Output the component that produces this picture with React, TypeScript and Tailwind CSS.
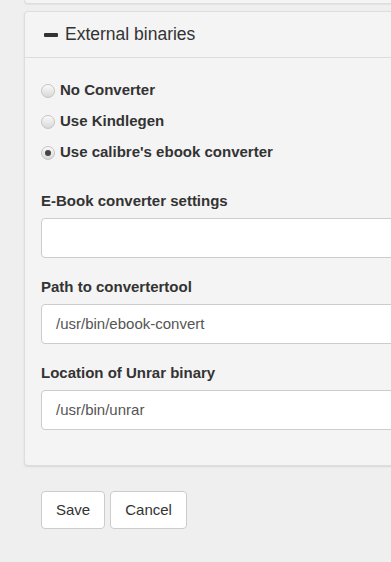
import React from 'react';

const RADIOS = [
  { label: 'No Converter', checked: false },
  { label: 'Use Kindlegen', checked: false },
  { label: "Use calibre's ebook converter", checked: true },
];

const FIELDS = [
  { label: 'E-Book converter settings', value: '' },
  { label: 'Path to convertertool', value: '/usr/bin/ebook-convert' },
  { label: 'Location of Unrar binary', value: '/usr/bin/unrar' },
];

const Radio = ({ checked }: { checked: boolean }) => (
  <span className="w-[14px] h-[14px] rounded-full border border-[#c4c4c4] bg-gradient-to-b from-[#fafafa] to-[#d8d8d8] flex items-center justify-center shrink-0">
    {checked && <span className="w-[6px] h-[6px] rounded-full bg-[#444]" />}
  </span>
);

export default function App() {
  return (
    <div className="min-h-[562px] bg-[#efefef] font-['Liberation_Sans',Arial,sans-serif] text-[#333] overflow-hidden">
      <div className="pl-[24px] -mr-[10px]">
        {/* previous panel (cut off) */}
        <div className="h-[4px] bg-[#f4f4f4] border border-t-0 border-[#dddddd] rounded-b-[4px] shadow-[0_1px_1px_rgba(0,0,0,0.05)]" />

        {/* External binaries panel */}
        <div className="mt-[7px] bg-[#f4f4f4] border border-[#dddddd] rounded-[4px] shadow-[0_1px_2px_rgba(0,0,0,0.1)]">
          <div className="h-[46px] border-b border-[#dddddd] flex items-center pl-[19px] gap-[7px]">
            <span className="w-[14px] h-[4px] bg-[#333] rounded-[1px]" />
            <span className="text-[17.5px] leading-none text-[#333]">External binaries</span>
          </div>
          <div className="pl-[16px] pt-[23px] pb-[35px]">
            <div className="flex flex-col gap-[12px]">
              {RADIOS.map((r) => (
                <label key={r.label} className="flex items-center gap-[5px] h-[19px] text-[15px] font-bold text-[#333]">
                  <Radio checked={r.checked} />
                  {r.label}
                </label>
              ))}
            </div>
            <div className="mt-[30px] flex flex-col gap-[20px]">
              {FIELDS.map((f) => (
                <div key={f.label}>
                  <div className="text-[15px] font-bold text-[#333] leading-[18px] mb-[8px]">{f.label}</div>
                  <div className="h-[40px] bg-white border border-[#cccccc] rounded-[4px] flex items-center pl-[14px] text-[15px] text-[#555]">
                    {f.value}
                  </div>
                </div>
              ))}
            </div>
          </div>
        </div>
      </div>

      <div className="pl-[41px] pt-[25px] flex gap-[5px]">
        <button className="h-[38px] px-[14px] bg-white border border-[#cccccc] rounded-[4px] text-[15px] text-[#333]">Save</button>
        <button className="h-[38px] px-[14px] bg-white border border-[#cccccc] rounded-[4px] text-[15px] text-[#333]">Cancel</button>
      </div>
    </div>
  );
}
